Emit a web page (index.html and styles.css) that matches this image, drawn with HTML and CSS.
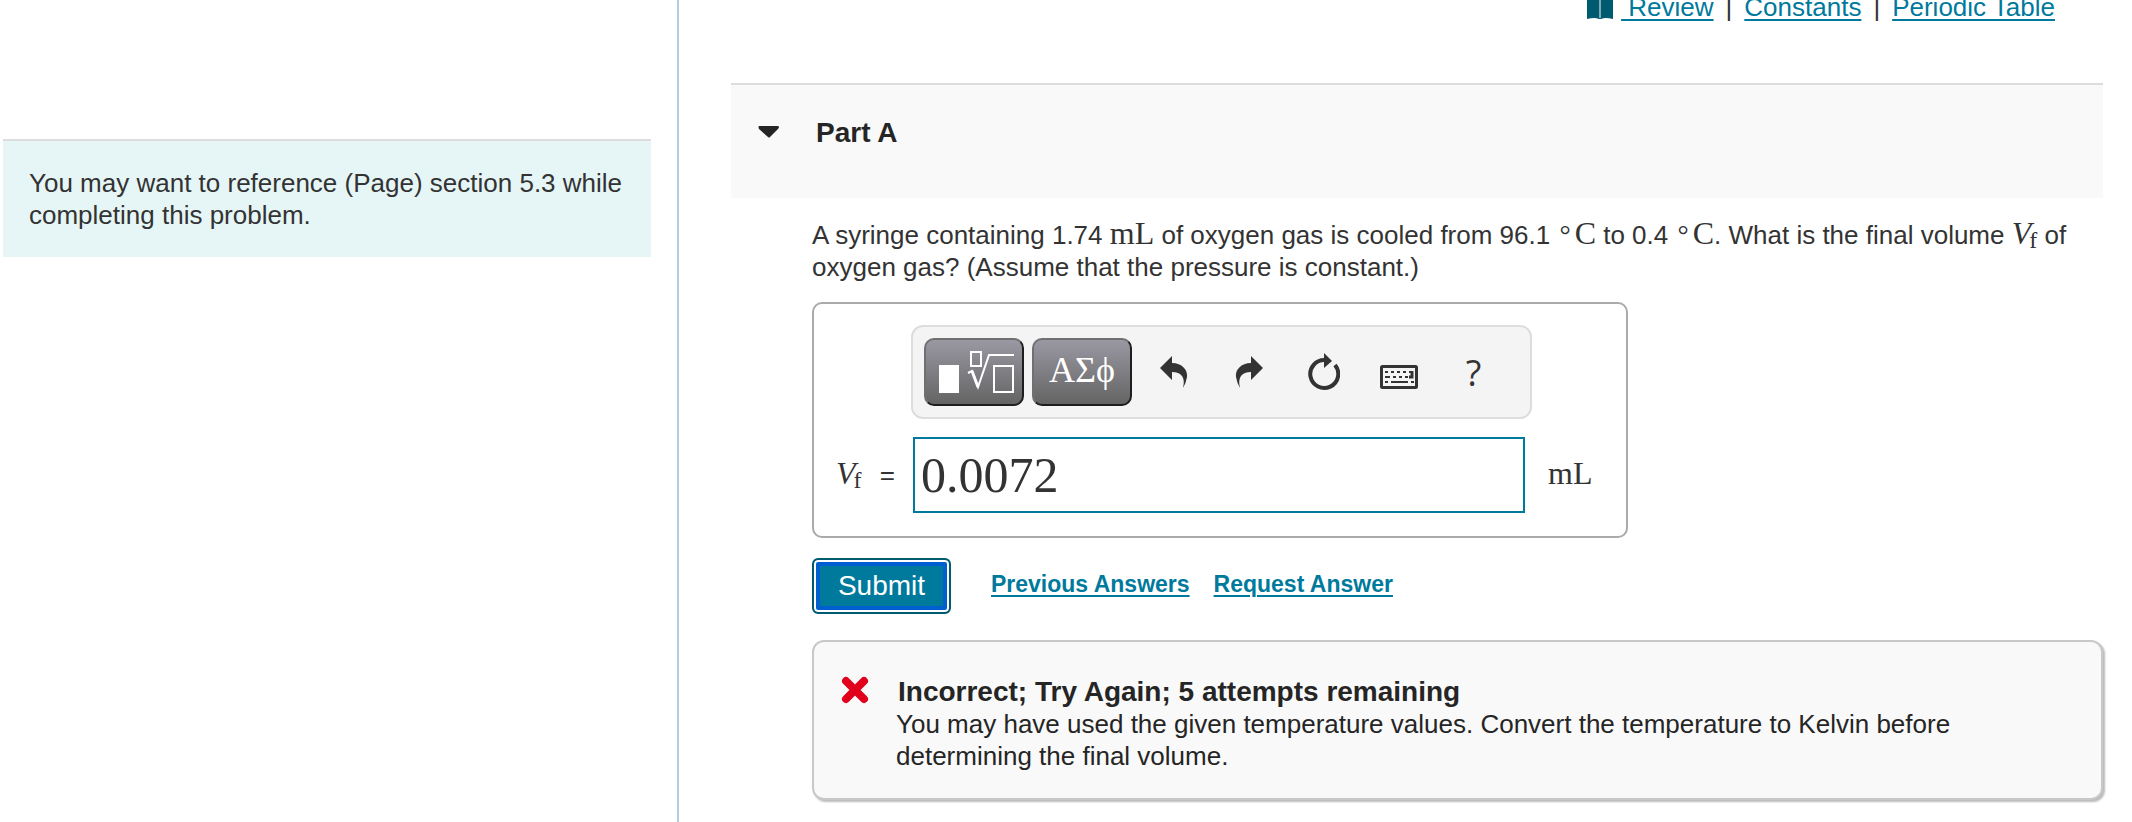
FILE: index.html
```
<!DOCTYPE html>
<html lang="en">

<head>
    <meta charset="UTF-8">
    <meta name="viewport" content="width=device-width, initial-scale=1.0">
    <title>Part A</title>
    <link rel="stylesheet" href="styles.css">
</head>

<body>
    <div class="page">
        <aside class="side">
            <div class="note">You may want to reference (Page) section 5.3 while completing this problem.</div>
        </aside>
        <main class="main">
            <nav class="top-links">
                <svg class="book" width="26" height="24" viewBox="0 0 26 24">
                    <path d="M0 0H10Q12 0 13 2Q14 0 16 0H26V24Q18 22 14 24H12Q8 22 0 24Z" fill="#005a70" />
                    <path d="M13 2V23" stroke="#7fa9b5" stroke-width="2" />
                </svg>
                <a href="#review">&nbsp;Review</a>
                <span class="sep">|</span>
                <a href="#constants">Constants</a>
                <span class="sep">|</span>
                <a href="#table">Periodic Table</a>
            </nav>

            <header class="part-header">
                <button type="button" class="collapse" aria-label="Collapse Part A">
                    <svg width="22" height="12" viewBox="0 0 22 12">
                        <path d="M1 0H20Q22 1 20 3L12 11Q11 12 10 11L1 3Q0 1 1 0Z" fill="#252525" />
                    </svg>
                </button>
                <h2>Part A</h2>
            </header>

            <div class="content">
                <p class="question">A syringe containing 1.74 <span class="math">mL</span> of oxygen gas is cooled from
                    96.1 <span class="math"><span class="deg">°</span>C</span> to 0.4 <span class="math"><span
                            class="deg">°</span>C</span>. What is the final volume <span class="math"><i>V</i><sub>f</sub></span> of
                    oxygen gas? (Assume that the pressure is constant.)</p>

                <form id="answer-form" class="answer-box">
                    <div class="toolbar">
                        <button type="button" class="dark-btn" aria-label="Templates">
                            <svg width="76" height="44" viewBox="0 0 76 44" fill="none" stroke="#fff" stroke-width="2">
                                <rect x="1" y="15" width="20" height="28" fill="#fff" stroke="none" />
                                <rect x="33" y="2" width="10" height="14" />
                                <path d="M30 23L34 21L40 37L51 5H76" />
                                <path d="M34 21L40 37" stroke-width="3" />
                                <rect x="56" y="16" width="19" height="26" />
                            </svg>
                        </button>
                        <button type="button" class="dark-btn greek">ΑΣϕ</button>
                        <div class="tools">
                            <button type="button" aria-label="Undo">
                                <svg width="28" height="32" viewBox="0 0 28 32" fill="#333">
                                    <path d="M0 12L12 0V7C22 7 28 14 27 21Q26 27 23 32Q25 24 22 20Q19 16 12 16V24Z" />
                                </svg>
                            </button>
                            <button type="button" aria-label="Redo">
                                <svg width="28" height="32" viewBox="0 0 28 32" fill="#333">
                                    <path d="M28 12L16 0V7C6 7 0 14 1 21Q2 27 5 32Q3 24 6 20Q9 16 16 16V24Z" />
                                </svg>
                            </button>
                            <button type="button" aria-label="Reset">
                                <svg width="32" height="38" viewBox="0 0 32 38">
                                    <path d="M17 7A14 14 0 1 0 27 12" fill="none" stroke="#333" stroke-width="4" />
                                    <path d="M16 0L24 8L16 15Z" fill="#333" />
                                </svg>
                            </button>
                            <button type="button" class="keyboard" aria-label="Keyboard">
                                <svg width="38" height="24" viewBox="0 0 38 24" fill="none" stroke="#333">
                                    <rect x="1.5" y="1.5" width="35" height="21" rx="1" stroke-width="3" />
                                    <path d="M5 7H8M11 7H14M17 7H20M23 7H26M29 7H31M5 12H10M13 12H16M19 12H22M25 12H28M5 17H8M11 17H28M31 17H34" stroke-width="2" />
                                    <path d="M32 6V12H29" stroke-width="3" />
                                </svg>
                            </button>
                            <button type="button" class="help" aria-label="Help">?</button>
                        </div>
                    </div>
                    <label class="answer-label" for="answer"><span class="math"><i>V</i><sub>f</sub></span><span
                            class="equals">=</span></label>
                    <input class="answer-input" id="answer" type="text" value="0.0072">
                    <span class="unit math">mL</span>
                </form>

                <div class="actions">
                    <button type="submit" class="submit" form="answer-form">Submit</button>
                    <a href="#previous">Previous Answers</a>
                    <a href="#request">Request Answer</a>
                </div>

                <section class="feedback">
                    <svg class="wrong" width="28" height="28" viewBox="0 0 28 28">
                        <path d="M5 5L23 23M23 5L5 23" stroke="#e0001b" stroke-width="8" stroke-linecap="round" />
                    </svg>
                    <div>
                        <h3>Incorrect; Try Again; 5 attempts remaining</h3>
                        <p>You may have used the given temperature values. Convert the temperature to Kelvin before
                            determining the final volume.</p>
                    </div>
                </section>
            </div>
        </main>
    </div>
</body>

</html>
```
FILE: styles.css
```
* {
    box-sizing: border-box;
}

body {
    margin: 0;
    background: #fff;
    color: #333;
    font-family: "Liberation Sans", Arial, sans-serif;
    font-size: 26px;
    line-height: 32px;
}

h2,
h3,
p {
    margin: 0;
}

button {
    padding: 0;
    border: none;
    background: none;
    color: #333;
    font-family: inherit;
}

svg {
    display: block;
}

a {
    color: #007a9c;
    text-decoration: underline;
    text-decoration-thickness: 2px;
    text-underline-offset: 3px;
}

.page {
    display: flex;
    min-height: 100vh;
}

.side {
    flex: 0 0 679px;
    padding: 139px 26px 0 3px;
    border-right: 2px solid #b8cbdd;
}

.note {
    padding: 26px;
    min-height: 118px;
    border-top: 2px solid #ddd;
    background: #e6f6f7;
}

.main {
    flex: 1;
    min-width: 0;
    padding: 0 29px 0 52px;
}

/* the bar is partly scrolled out at the top */
.top-links {
    display: flex;
    justify-content: flex-end;
    align-items: center;
    margin-top: -9px;
    padding: 0 48px 60px 0;
}

.book {
    margin-right: 8px;
}

.sep {
    margin: 0 12px;
}

.part-header {
    display: flex;
    align-items: flex-start;
    gap: 36px;
    padding: 32px 27px 49px;
    border-top: 2px solid #ddd;
    background: #f9f9f9;
}

.collapse {
    padding: 9px 0;
}

.part-header h2,
.feedback h3 {
    color: #252525;
    font-size: 28px;
    font-weight: bold;
}

.content {
    padding: 21px 0 20px 81px;
}

.math {
    font-family: "Liberation Serif", "Times New Roman", serif;
    font-size: 32px;
    line-height: 28px;
}

.math sub {
    margin-left: -2px;
    font-size: 24px;
    line-height: 16px;
    vertical-align: -4px;
}

.deg {
    padding: 0 4px 0 2px;
    font-size: 28px;
}

.answer-box {
    display: grid;
    grid-template-columns: 97px 1fr 94px;
    row-gap: 18px;
    align-items: center;
    max-width: 816px;
    margin-top: 19px;
    padding: 21px 0 23px;
    border: 2px solid #aaa;
    border-radius: 10px;
}

.toolbar {
    grid-column: 2;
    display: flex;
    padding: 11px;
    border: 2px solid #ddd;
    border-radius: 12px;
    background: #f4f4f4;
}

.dark-btn {
    display: flex;
    align-items: center;
    justify-content: center;
    width: 100px;
    height: 68px;
    padding-left: 4px;
    border: 2px solid;
    border-color: #707070 #1e1e1e #1e1e1e #707070;
    border-radius: 10px;
    background: linear-gradient(#9a98a2, #646464);
    color: #fff;
}

.greek {
    margin-left: 8px;
    padding: 0 0 4px;
    font-family: "Liberation Serif", serif;
    font-size: 36px;
}

.tools {
    display: flex;
    margin-left: 4px;
}

.tools button {
    display: flex;
    align-items: center;
    justify-content: center;
    width: 75px;
}

.tools .keyboard {
    padding-top: 10px;
}

.tools .help {
    font-family: "Open Sans", sans-serif;
    font-size: 36px;
}

.answer-label {
    grid-column: 1;
    display: flex;
    align-items: baseline;
    justify-content: space-between;
    padding: 0 16px 0 22px;
}

.answer-input {
    min-width: 0;
    height: 76px;
    margin: 0 7px 0 2px;
    padding: 0 6px;
    border: 2px solid #007a9c;
    outline: none;
    color: #333;
    font-family: "Liberation Serif", "Times New Roman", serif;
    font-size: 50px;
}

.unit {
    padding: 0 0 4px 16px;
}

.actions {
    display: flex;
    align-items: center;
    gap: 24px;
    margin-top: 20px;
}

.actions a {
    padding-bottom: 4px;
    font-size: 23px;
    font-weight: bold;
}

.submit {
    width: 139px;
    height: 56px;
    margin-right: 16px;
    border: 2px solid #005a70;
    border-radius: 6px;
    background: #007a9c;
    box-shadow: inset 0 0 0 2px #fff, inset 0 0 0 6px #005fd0;
    color: #fff;
    font-size: 28px;
}

.feedback {
    display: flex;
    align-items: flex-start;
    gap: 27px;
    margin-top: 26px;
    padding: 34px 27px 26px;
    border: 2px solid #c8c8c8;
    border-radius: 12px;
    background: #f9f9f9;
    box-shadow: 2px 2px 2px #bbb;
    color: #252525;
}

.feedback h3 {
    padding-left: 2px;
}

.wrong {
    flex: none;
}
```
